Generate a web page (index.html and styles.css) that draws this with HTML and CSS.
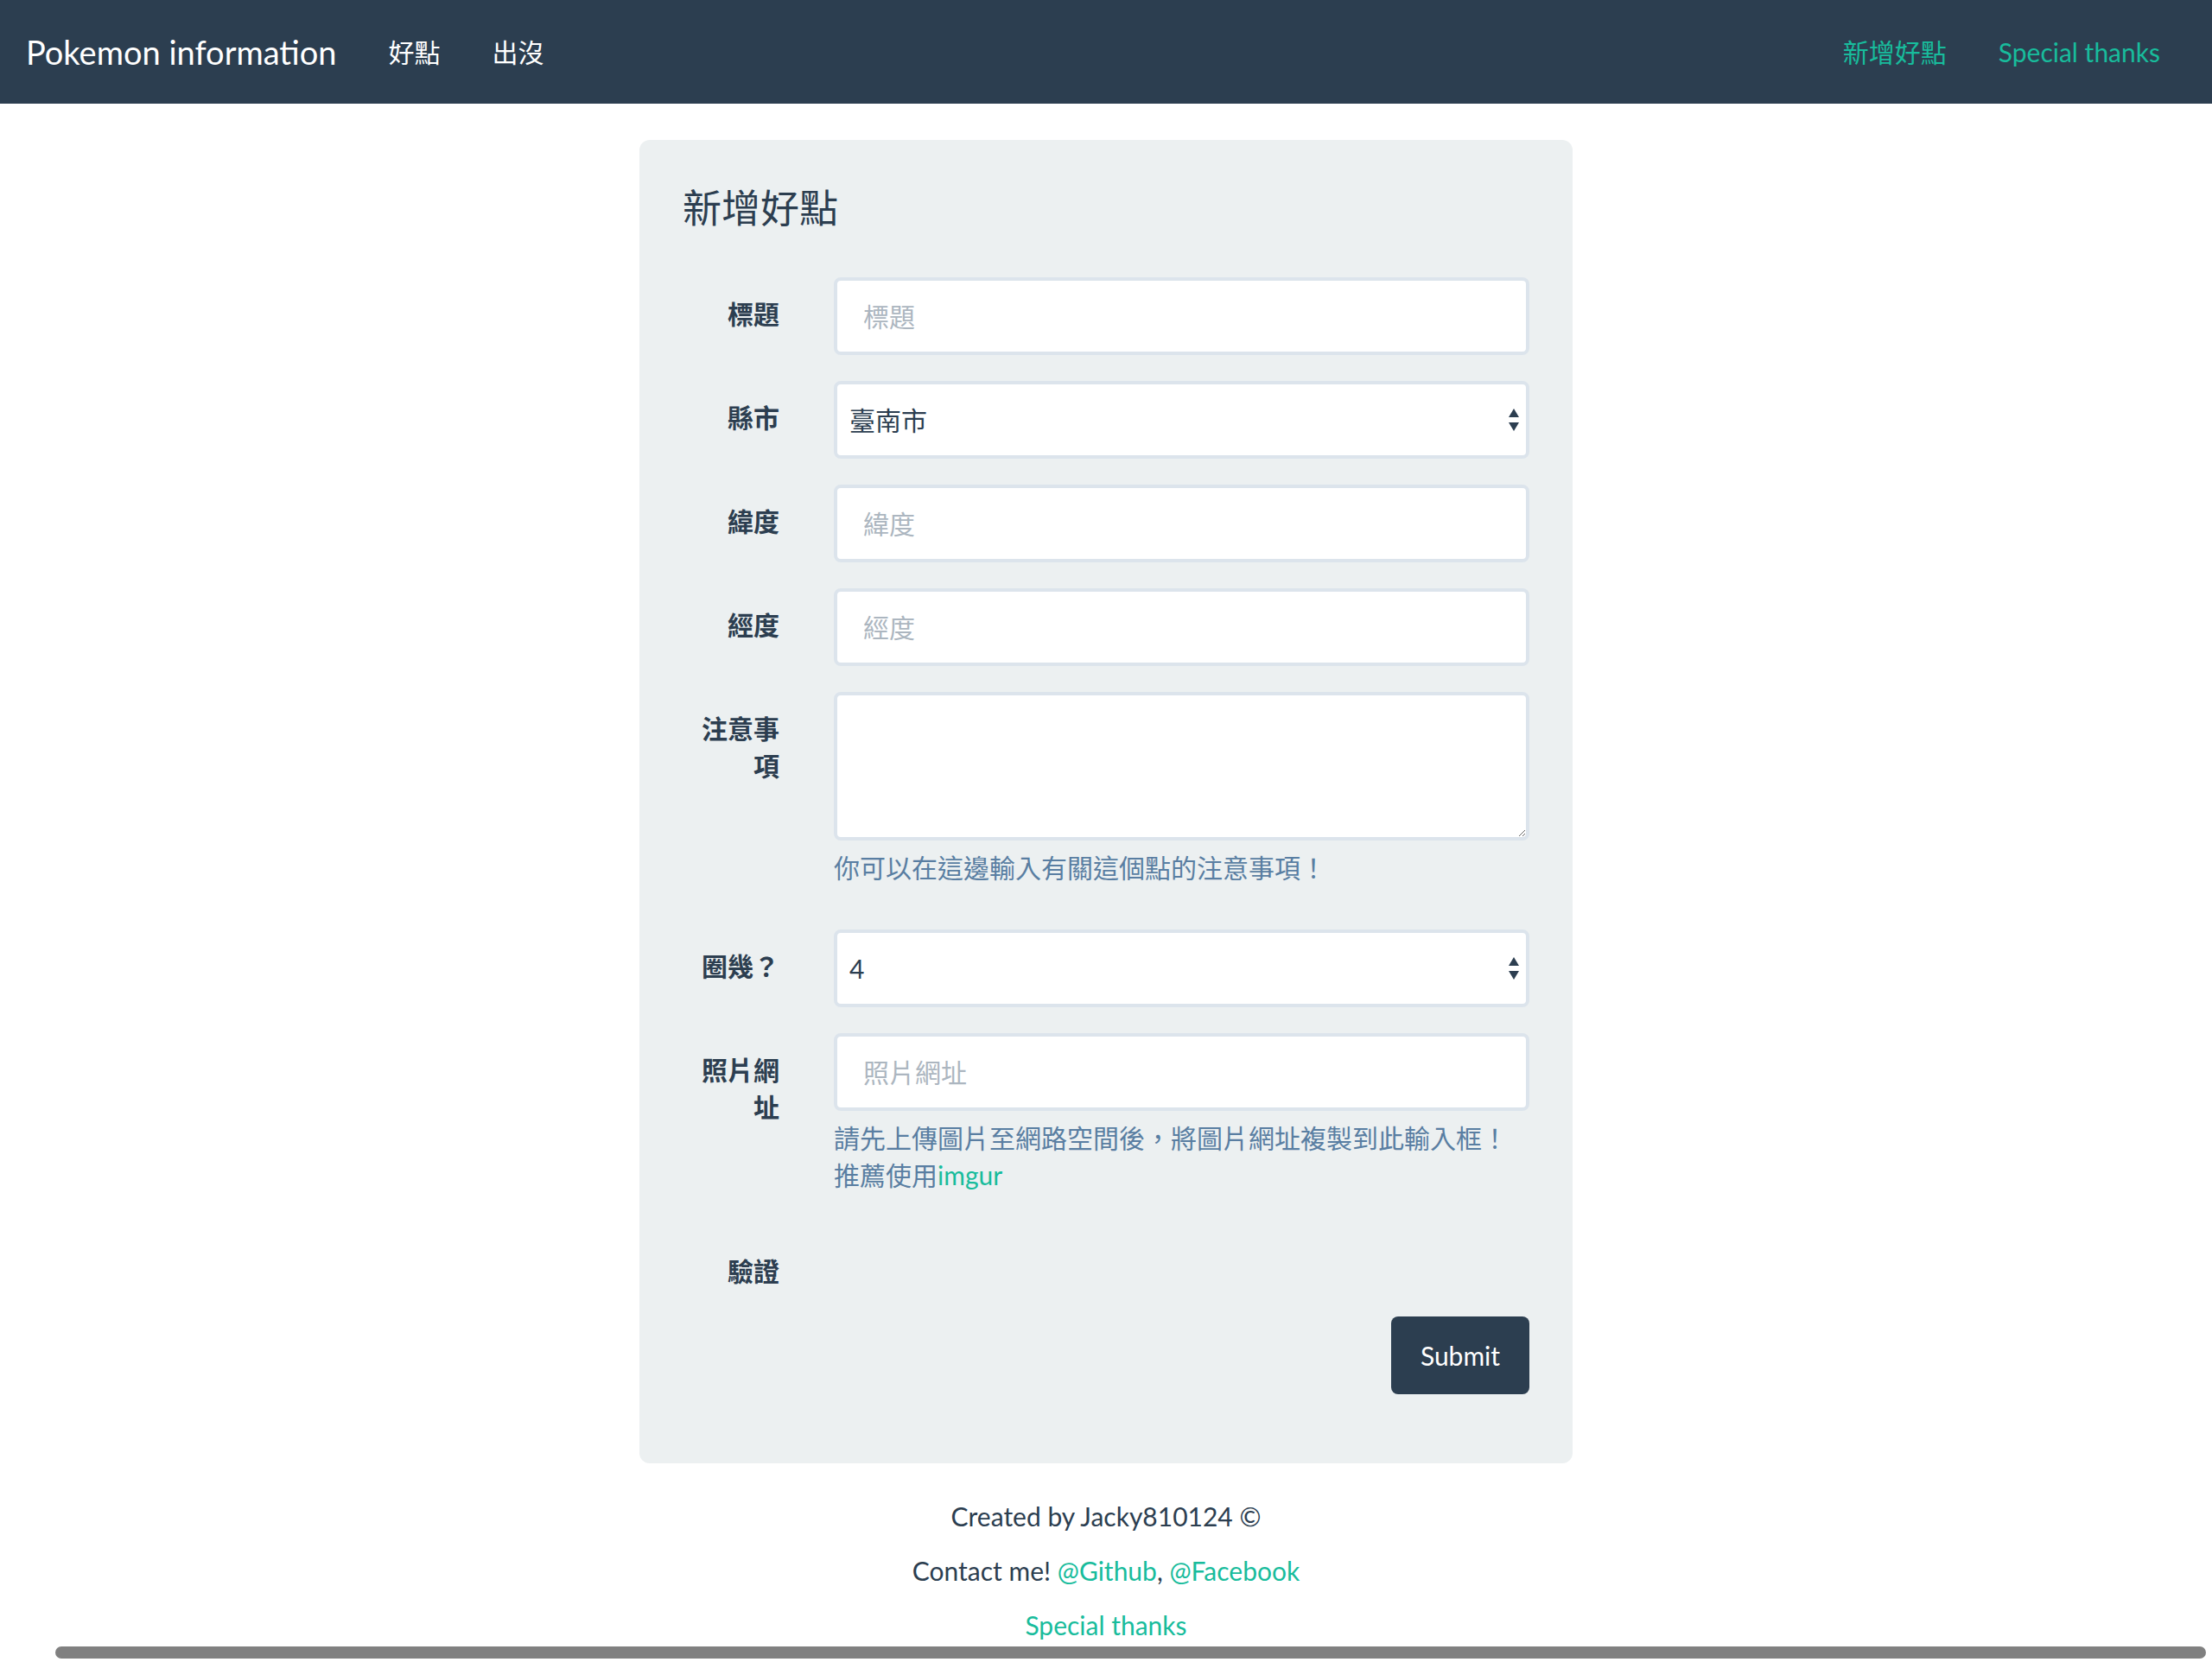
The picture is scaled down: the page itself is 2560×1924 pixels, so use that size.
FILE: index.html
```html
<!DOCTYPE html>
<html lang="zh-Hant">
<head>
<meta charset="utf-8">
<title>Pokemon information</title>
<link rel="stylesheet" href="styles.css">
</head>
<body>
<nav class="navbar">
  <div class="nav-left">
    <a class="brand" href="#">Pokemon information</a>
    <a class="nav-link" href="#">好點</a>
    <a class="nav-link" href="#">出沒</a>
  </div>
  <div class="nav-right">
    <a class="nav-link accent" href="#">新增好點</a>
    <a class="nav-link accent" href="#">Special thanks</a>
  </div>
</nav>

<main class="panel">
  <h1 class="legend">新增好點</h1>
  <form class="form">
    <div class="row">
      <label class="label">標題</label>
      <div class="control"><input class="field" type="text" placeholder="標題"></div>
    </div>
    <div class="row">
      <label class="label">縣市</label>
      <div class="control select-wrap">
        <select class="field select"><option>臺南市</option></select>
      </div>
    </div>
    <div class="row">
      <label class="label">緯度</label>
      <div class="control"><input class="field" type="text" placeholder="緯度"></div>
    </div>
    <div class="row">
      <label class="label">經度</label>
      <div class="control"><input class="field" type="text" placeholder="經度"></div>
    </div>
    <div class="row">
      <label class="label">注意事項</label>
      <div class="control">
        <textarea class="field area"></textarea>
        <p class="help">你可以在這邊輸入有關這個點的注意事項！</p>
      </div>
    </div>
    <div class="row">
      <label class="label">圈幾？</label>
      <div class="control select-wrap">
        <select class="field select"><option>4</option></select>
      </div>
    </div>
    <div class="row">
      <label class="label">照片網址</label>
      <div class="control">
        <input class="field" type="text" placeholder="照片網址">
        <p class="help">請先上傳圖片至網路空間後，將圖片網址複製到此輸入框！<br>推薦使用<a href="#">imgur</a></p>
      </div>
    </div>
    <div class="row row-verify">
      <label class="label">驗證</label>
      <div class="control"></div>
    </div>
    <div class="submit-row">
      <button class="btn" type="button">Submit</button>
    </div>
  </form>
</main>

<footer class="footer">
  <p>Created by Jacky810124 ©</p>
  <p>Contact me! <a href="#">@Github</a>, <a href="#">@Facebook</a></p>
  <p><a href="#">Special thanks</a></p>
</footer>

<div class="scrollbar"></div>
</body>
</html>
```

FILE: styles.css
```css
* { box-sizing: border-box; }

html, body {
  margin: 0;
  padding: 0;
  background: #ffffff;
}

body {
  font-family: Lato, "Noto Sans CJK TC", "Noto Sans", sans-serif;
  font-size: 30px;
  line-height: 43px;
  color: #2c3e50;
  overflow: hidden;
  height: 1924px;
}

a { color: #18bc9c; text-decoration: none; }

/* Navbar */
.navbar {
  height: 120px;
  background: #2c3e50;
  display: flex;
  justify-content: space-between;
  align-items: stretch;
  padding: 0 30px;
}
.nav-left, .nav-right {
  display: flex;
  align-items: stretch;
}
.brand {
  color: #ffffff;
  font-size: 38px;
  line-height: 40px;
  padding: 40px 30px 40px 0;
}
.nav-link {
  color: #ffffff;
  font-size: 30px;
  line-height: 40px;
  padding: 40px 30px;
}
.nav-link.accent { color: #18bc9c; }

/* Panel */
.panel {
  width: 1080px;
  margin: 42px auto 0;
  background: #ecf0f1;
  border-radius: 12px;
  padding: 47px 50px 80px;
}
.legend {
  margin: 0 0 48px;
  font-size: 45px;
  line-height: 64px;
  font-weight: 400;
  color: #2c3e50;
}

.row {
  display: grid;
  grid-template-columns: 112px 805px;
  column-gap: 63px;
  margin-bottom: 30px;
}
.row-verify { margin-bottom: 31px; }
.row-verify .label { padding-top: 18px; }

.label {
  text-align: right;
  font-weight: 700;
  padding-top: 21px;
  line-height: 43px;
}

.control { position: relative; }

.field {
  display: block;
  width: 100%;
  height: 90px;
  border: 4px solid #dce4ec;
  border-radius: 8px;
  background: #ffffff;
  padding: 0 30px;
  font-family: Lato, "Noto Sans CJK TC", "Noto Sans", sans-serif;
  font-size: 30px;
  color: #2c3e50;
  outline: none;
  margin: 0;
}
.field::placeholder { color: #acb6c0; }

.select {
  -webkit-appearance: none;
  appearance: none;
  padding: 0 40px 0 14px;
}
.select-wrap::before,
.select-wrap::after {
  content: "";
  position: absolute;
  right: 12px;
  width: 0;
  height: 0;
  border-left: 6.5px solid transparent;
  border-right: 6.5px solid transparent;
  pointer-events: none;
}
.select-wrap::before {
  top: 32px;
  border-bottom: 10px solid #2c3e50;
}
.select-wrap::after {
  top: 48px;
  border-top: 10px solid #2c3e50;
}

.area {
  height: 172px;
  padding: 20px 30px;
  resize: vertical;
  line-height: 43px;
}

.help {
  margin: 10px 0 20px;
  color: #597ea2;
  line-height: 43px;
}

.submit-row {
  display: flex;
  justify-content: flex-end;
}
.btn {
  width: 160px;
  height: 90px;
  background: #2c3e50;
  color: #ffffff;
  border: none;
  border-radius: 8px;
  font-family: Lato, "Noto Sans", sans-serif;
  font-size: 30px;
  font-weight: 400;
  padding: 0;
}

/* Footer */
.footer {
  margin-top: 40px;
  text-align: center;
}
.footer p {
  margin: 0 0 20px;
  line-height: 43px;
}

/* Overlay scrollbar thumb */
.scrollbar {
  position: fixed;
  left: 64px;
  right: 7px;
  bottom: 4px;
  height: 14px;
  border-radius: 7px;
  background: #808080;
}
```
